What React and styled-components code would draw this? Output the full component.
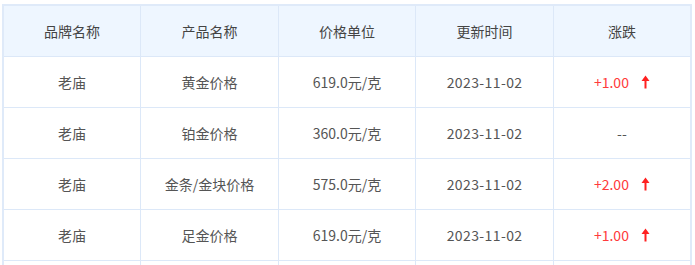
import React from 'react';
import styled, { createGlobalStyle } from 'styled-components';

const GlobalStyle = createGlobalStyle`
  body {
    margin: 0;
    background: #fff;
    font-family: "Microsoft YaHei", "Noto Sans CJK SC", "Noto Sans", sans-serif;
  }
`

const Wrap = styled.div`
  padding: 4px 0 0 2px;
`

const Table = styled.table`
  width: 690px;
  border-collapse: collapse;
  table-layout: fixed;
  border: 2px solid #dfeaf9;
  font-size: 14px;
  color: #555;
`

const Th = styled.th`
  height: 50px;
  padding: 0;
  font-weight: normal;
  color: #444;
  background: #eef6ff;
  border: 1px solid #dce8f8;
  text-align: center;
`

const Td = styled.td`
  height: 50px;
  padding: 0;
  border: 1px solid #dce8f8;
  text-align: center;
  color: ${props => props.$up ? '#ff3b3b' : '#555'};
  letter-spacing: ${props => props.$date ? '0.4px' : 'normal'};
`

const Change = styled.span`
  display: inline-flex;
  align-items: center;
  gap: 12px;
`

const Arrow = () => (
  <svg width="9" height="14" viewBox="0 0 9 14">
    <path d="M4.5 0.5 L8.5 6 L5.5 6 L5.5 13.5 L3.5 13.5 L3.5 6 L0.5 6 Z" fill="#ff2020" />
  </svg>
);

const rows = [
  { product: '黄金价格', price: '619.0元/克', change: '+1.00' },
  { product: '铂金价格', price: '360.0元/克', change: null },
  { product: '金条/金块价格', price: '575.0元/克', change: '+2.00' },
  { product: '足金价格', price: '619.0元/克', change: '+1.00' },
];

const App = () => (
  <Wrap>
    <GlobalStyle />
    <Table>
      <thead>
        <tr>
          <Th>品牌名称</Th>
          <Th>产品名称</Th>
          <Th>价格单位</Th>
          <Th>更新时间</Th>
          <Th>涨跌</Th>
        </tr>
      </thead>
      <tbody>
        {rows.map(row => (
          <tr key={row.product}>
            <Td>老庙</Td>
            <Td>{row.product}</Td>
            <Td>{row.price}</Td>
            <Td $date>2023-11-02</Td>
            {row.change ? (
              <Td $up>
                <Change>{row.change}<Arrow /></Change>
              </Td>
            ) : (
              <Td>--</Td>
            )}
          </tr>
        ))}
        <tr>
          <Td />
          <Td />
          <Td />
          <Td />
          <Td />
        </tr>
      </tbody>
    </Table>
  </Wrap>
);

export default App;
